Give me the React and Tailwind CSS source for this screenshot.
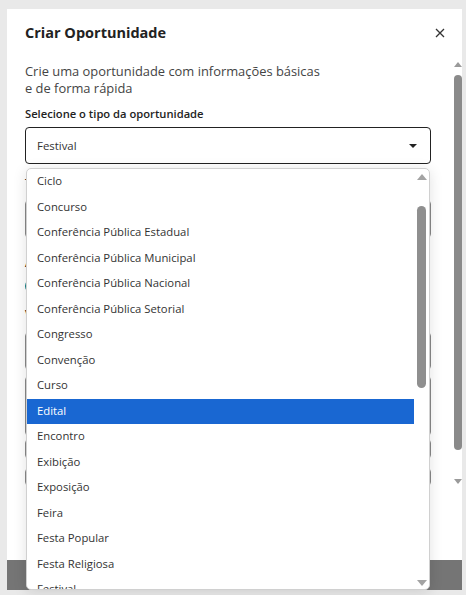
import React from 'react';

const tipos = [
  'Ciclo',
  'Concurso',
  'Conferência Pública Estadual',
  'Conferência Pública Municipal',
  'Conferência Pública Nacional',
  'Conferência Pública Setorial',
  'Congresso',
  'Convenção',
  'Curso',
  'Edital',
  'Encontro',
  'Exibição',
  'Exposição',
  'Feira',
  'Festa Popular',
  'Festa Religiosa',
  'Festival',
];

const UpArrow = ({ className }) => (
  <svg width="10" height="6" viewBox="0 0 10 6" className={className}>
    <path d="M5 0 L10 6 L0 6 Z" fill="currentColor" />
  </svg>
);

const DownArrow = ({ className }) => (
  <svg width="10" height="6" viewBox="0 0 10 6" className={className}>
    <path d="M0 0 L10 0 L5 6 Z" fill="currentColor" />
  </svg>
);

const App = () => {
  return (
    <div
      className="min-h-[595px] bg-[#e9e9e9] pt-[9px] pl-[7px] pr-[4px] pb-[5px]"
      style={{ fontFamily: '"Open Sans", "Noto Sans", sans-serif' }}
    >
      <div className="relative bg-white h-[581px] flex flex-col">
        {/* header */}
        <div className="h-[49px] flex items-start justify-between pl-[18px] pr-[16px] pt-[13px]">
          <h2 className="text-[14.5px] leading-[22px] font-bold text-[#222]">Criar Oportunidade</h2>
          <svg width="10" height="10" viewBox="0 0 10 10" className="mt-[6px] mr-[1px] text-[#333]">
            <path d="M1 1 L9 9 M9 1 L1 9" stroke="currentColor" strokeWidth="1.3" />
          </svg>
        </div>

        {/* body */}
        <div className="h-[432px] flex">
          <div className="flex-1 overflow-hidden pl-[18px] pr-[23px] pt-[5px]">
            <p className="text-[12.9px] leading-[17px] text-[#444]">
              Crie uma oportunidade com informações básicas
              <br />e de forma rápida
            </p>
            <label className="block mt-[8px] text-[11.2px] leading-[17px] font-semibold text-[#222]">
              Selecione o tipo da oportunidade
            </label>
            <div className="mt-[5px] h-[37px] border border-[#222] rounded-[4px] flex items-center justify-between pl-[11px] pr-[13px]">
              <span className="text-[11.4px] text-[#333]">Festival</span>
              <svg width="8" height="4" viewBox="0 0 8 4" className="text-[#222]">
                <path d="M0 0 L8 0 L4 4 Z" fill="currentColor" />
              </svg>
            </div>

            {/* fields hidden behind the open list */}
            <div className="mt-[10px] text-[11.2px] leading-[17px] font-semibold text-[#222]">Título</div>
            <div className="mt-[9px] h-[38px] border border-[#888] rounded-[4px]" />
            <div className="mt-[16px] text-[11.2px] leading-[17px] font-semibold text-[#222]">Área de interesse</div>
            <div className="mt-[8px] w-[120px] h-[14px] rounded-full bg-[#0b7a80]" />
            <div className="mt-[12px] text-[11.2px] leading-[17px] font-semibold text-[#222]">Vincule a oportunidade</div>
            <div className="mt-[10px] h-[38px] border border-[#888] rounded-[4px]" />
            <div className="mt-[6px] h-[60px] border border-[#888] rounded-[4px]" />
            <div className="mt-[3px] h-[20px] border border-[#888] rounded-[4px]" />
            <div className="mt-[9px] h-[18px] border border-[#888] rounded-[4px]" />
          </div>

          {/* modal scrollbar */}
          <div className="w-[8px] flex flex-col items-center pt-[4px]">
            <UpArrow className="text-[#9a9a9a] w-[8px] h-[5px]" />
            <div className="mt-[8px] w-[8px] h-[375px] rounded-full bg-[#8a8a8a]" />
            <div className="flex-1" />
            <DownArrow className="text-[#9a9a9a] w-[8px] h-[5px] mb-[6px]" />
          </div>
        </div>

        <div className="h-[70px]" />
        <div className="h-[30px] bg-[#757575]" />

        {/* open select list */}
        <div className="absolute left-[19px] top-[159px] w-[404px] h-[422px] bg-white border border-[#d0d0d0] rounded-[5px] shadow-[0_2px_14px_rgba(0,0,0,0.12)] overflow-hidden flex">
          <ul className="flex-1">
            {tipos.map((t) => (
              <li
                key={t}
                className={
                  t === 'Edital'
                    ? 'h-[25.5px] flex items-center pl-[10px] text-[11.3px] bg-[#1967d2] text-white'
                    : 'h-[25.5px] flex items-center pl-[10px] text-[11.3px] text-[#333]'
                }
              >
                {t}
              </li>
            ))}
          </ul>
          <div className="w-[15px] flex flex-col items-center pt-[5px]">
            <UpArrow className="text-[#a3a3a3] w-[10px] h-[6px]" />
            <div className="mt-[26px] w-[9px] h-[182px] rounded-full bg-[#8f8f8f]" />
            <div className="flex-1" />
            <DownArrow className="text-[#a3a3a3] w-[10px] h-[6px] mb-[3px]" />
          </div>
        </div>
      </div>
    </div>
  );
};

export default App;
